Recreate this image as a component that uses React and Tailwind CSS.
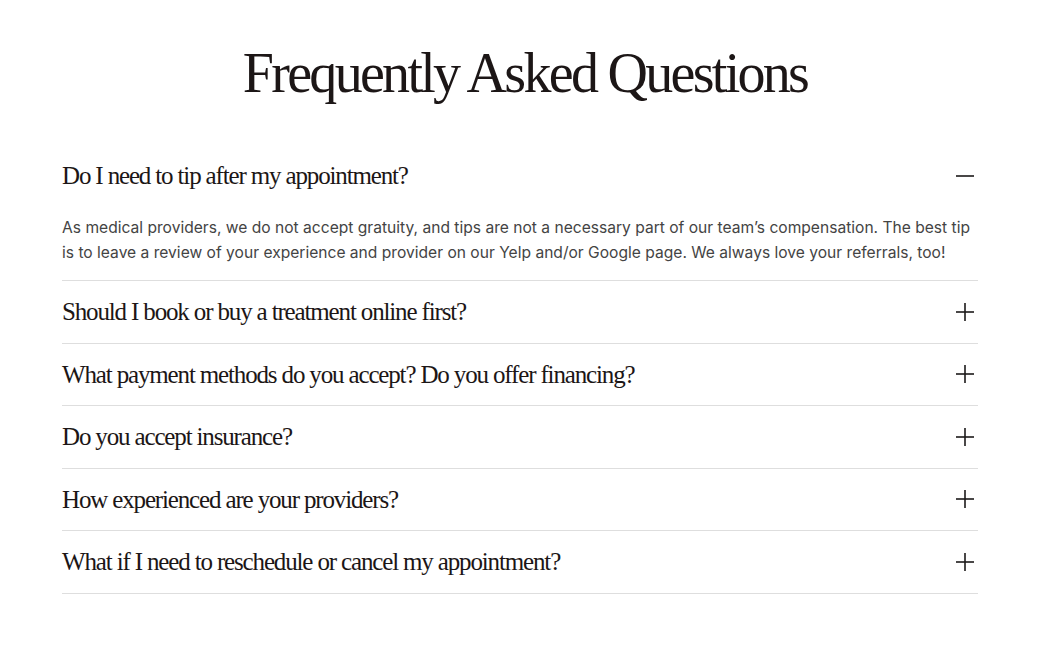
import { useState } from 'react';

const FAQS = [
  {
    q: 'Do I need to tip after my appointment?',
    a: "As medical providers, we do not accept gratuity, and tips are not a necessary part of our team’s compensation. The best tip is to leave a review of your experience and provider on our Yelp and/or Google page. We always love your referrals, too!",
  },
  { q: 'Should I book or buy a treatment online first?', a: '' },
  { q: 'What payment methods do you accept? Do you offer financing?', a: '' },
  { q: 'Do you accept insurance?', a: '' },
  { q: 'How experienced are your providers?', a: '' },
  { q: 'What if I need to reschedule or cancel my appointment?', a: '' },
];

const serif = { fontFamily: '"Liberation Serif", "DejaVu Serif", serif' };

function Icon({ open }) {
  return (
    <svg width="20" height="20" viewBox="0 0 20 20" fill="none" stroke="#1c1a1a" strokeWidth="1.6">
      <path d="M1 10h18" />
      {!open && <path d="M10 1v18" />}
    </svg>
  );
}

export default function App() {
  const [open, setOpen] = useState(0);

  return (
    <div className="w-[1050px] h-[652px] bg-white pt-[38px]">
      <h1 className="text-center text-[56px] leading-[70px] text-[#1c1616] tracking-[-2.7px]" style={serif}>
        Frequently Asked Questions
      </h1>

      <div className="mx-[62px] w-[916px] mt-[36px]">
        {FAQS.map((item, i) => (
          <div key={i} className="border-b border-[#dedede]">
            <button
              onClick={() => setOpen(open === i ? -1 : i)}
              className={`w-full flex items-center justify-between text-left ${i === 0 ? 'h-[64px]' : 'h-[61.5px]'}`}
            >
              <span className="text-[25px] text-[#1c1616] tracking-[-1.15px]" style={serif}>{item.q}</span>
              <span className="mr-[3px]"><Icon open={open === i} /></span>
            </button>
            {open === i && item.a && (
              <p
                className="text-[15.6px] leading-[25px] text-[#444] pt-[7px] pb-[15px]"
                style={{ fontFamily: 'Inter, "Liberation Sans", sans-serif' }}
              >
                {item.a}
              </p>
            )}
          </div>
        ))}
      </div>
    </div>
  );
}
